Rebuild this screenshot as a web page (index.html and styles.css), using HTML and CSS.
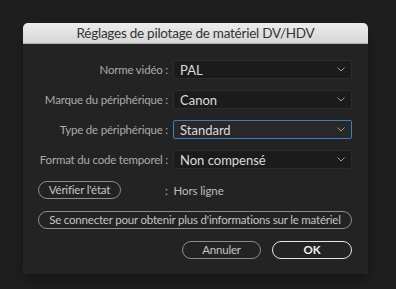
FILE: index.html
```html
<!DOCTYPE html>
<html lang="fr">
<head>
<meta charset="utf-8">
<link rel="stylesheet" href="styles.css">
</head>
<body>
<div class="dialog">
  <div class="titlebar">Réglages de pilotage de matériel DV/HDV</div>
  <div class="content">
    <div class="form">
      <label class="lbl">Norme vidéo :</label>
      <div class="select"><span>PAL</span><svg class="chev" width="8" height="5" viewBox="0 0 8 5"><path d="M0.5 0.5 L4 4 L7.5 0.5" fill="none" stroke="#9a9a9a" stroke-width="1"/></svg></div>
      <label class="lbl">Marque du périphérique :</label>
      <div class="select"><span>Canon</span><svg class="chev" width="8" height="5" viewBox="0 0 8 5"><path d="M0.5 0.5 L4 4 L7.5 0.5" fill="none" stroke="#9a9a9a" stroke-width="1"/></svg></div>
      <label class="lbl">Type de périphérique :</label>
      <div class="select focus"><span>Standard</span><svg class="chev" width="8" height="5" viewBox="0 0 8 5"><path d="M0.5 0.5 L4 4 L7.5 0.5" fill="none" stroke="#9a9a9a" stroke-width="1"/></svg></div>
      <label class="lbl">Format du code temporel :</label>
      <div class="select"><span>Non compensé</span><svg class="chev" width="8" height="5" viewBox="0 0 8 5"><path d="M0.5 0.5 L4 4 L7.5 0.5" fill="none" stroke="#9a9a9a" stroke-width="1"/></svg></div>
    </div>
    <div class="status-row">
      <button class="btn verify">Vérifier l'état</button>
      <span class="status">:&nbsp; Hors ligne</span>
    </div>
    <button class="btn connect">Se connecter pour obtenir plus d'informations sur le matériel</button>
    <div class="actions">
      <button class="btn cancel">Annuler</button>
      <button class="btn ok">OK</button>
    </div>
  </div>
</div>
</body>
</html>
```
FILE: styles.css
```css
html, body {
  margin: 0;
  padding: 0;
}
body {
  background: #1f1f1f;
  width: 396px;
  height: 289px;
  overflow: hidden;
  font-family: Lato, "Open Sans", sans-serif;
}
.dialog {
  margin: 23px 0 0 23px;
  width: 345px;
  height: 251px;
  background: #232323;
  border-radius: 5px 5px 0 0;
  box-shadow: 0 6px 14px rgba(0,0,0,0.35);
  display: flex;
  flex-direction: column;
}
.titlebar {
  height: 21px;
  line-height: 21px;
  text-align: center;
  font-size: 13.5px;
  letter-spacing: -0.25px;
  color: #333;
  background: linear-gradient(#ececec, #d6d6d6);
  border-radius: 5px 5px 0 0;
  border-bottom: 1px solid #b0b0b0;
  box-sizing: border-box;
}
.content {
  padding: 16px 16px 0 15px;
  display: flex;
  flex-direction: column;
}
.form {
  display: grid;
  grid-template-columns: 130px 179px;
  column-gap: 5px;
  row-gap: 11px;
  align-items: center;
}
.lbl {
  text-align: right;
  font-size: 11.5px;
  letter-spacing: -0.2px;
  color: #ababab;
  white-space: nowrap;
}
.select {
  height: 19px;
  box-sizing: border-box;
  background: #1b1b1b;
  border: 1px solid #2c2c2c;
  border-radius: 2px;
  display: flex;
  align-items: center;
  justify-content: space-between;
  padding: 0 6px 0 6px;
  font-size: 13px;
  color: #dcdcdc;
}
.select.focus {
  background: #282828;
  border-color: #3d7ec0;
}
.chev {
  display: block;
}
.btn {
  font-family: Lato, "Open Sans", sans-serif;
  font-size: 11.5px;
  letter-spacing: -0.2px;
  color: #c4c4c4;
  background: transparent;
  border: 1px solid #8c8c8c;
  border-radius: 9px;
  height: 18px;
  box-sizing: border-box;
  padding: 0;
  line-height: 16px;
  text-align: center;
  white-space: nowrap;
}
.status-row {
  display: flex;
  align-items: center;
  margin-top: 12px;
}
.verify {
  width: 83px;
}
.status {
  margin-left: 44px;
  font-size: 11.5px;
  letter-spacing: -0.1px;
  color: #bdbdbd;
}
.connect {
  margin-top: 12px;
  width: 314px;
}
.actions {
  margin-top: 12px;
  display: flex;
  justify-content: flex-end;
  gap: 11px;
}
.cancel {
  width: 79px;
}
.ok {
  width: 80px;
  border-color: #e4e4e4;
  color: #f2f2f2;
  font-weight: bold;
}
```
